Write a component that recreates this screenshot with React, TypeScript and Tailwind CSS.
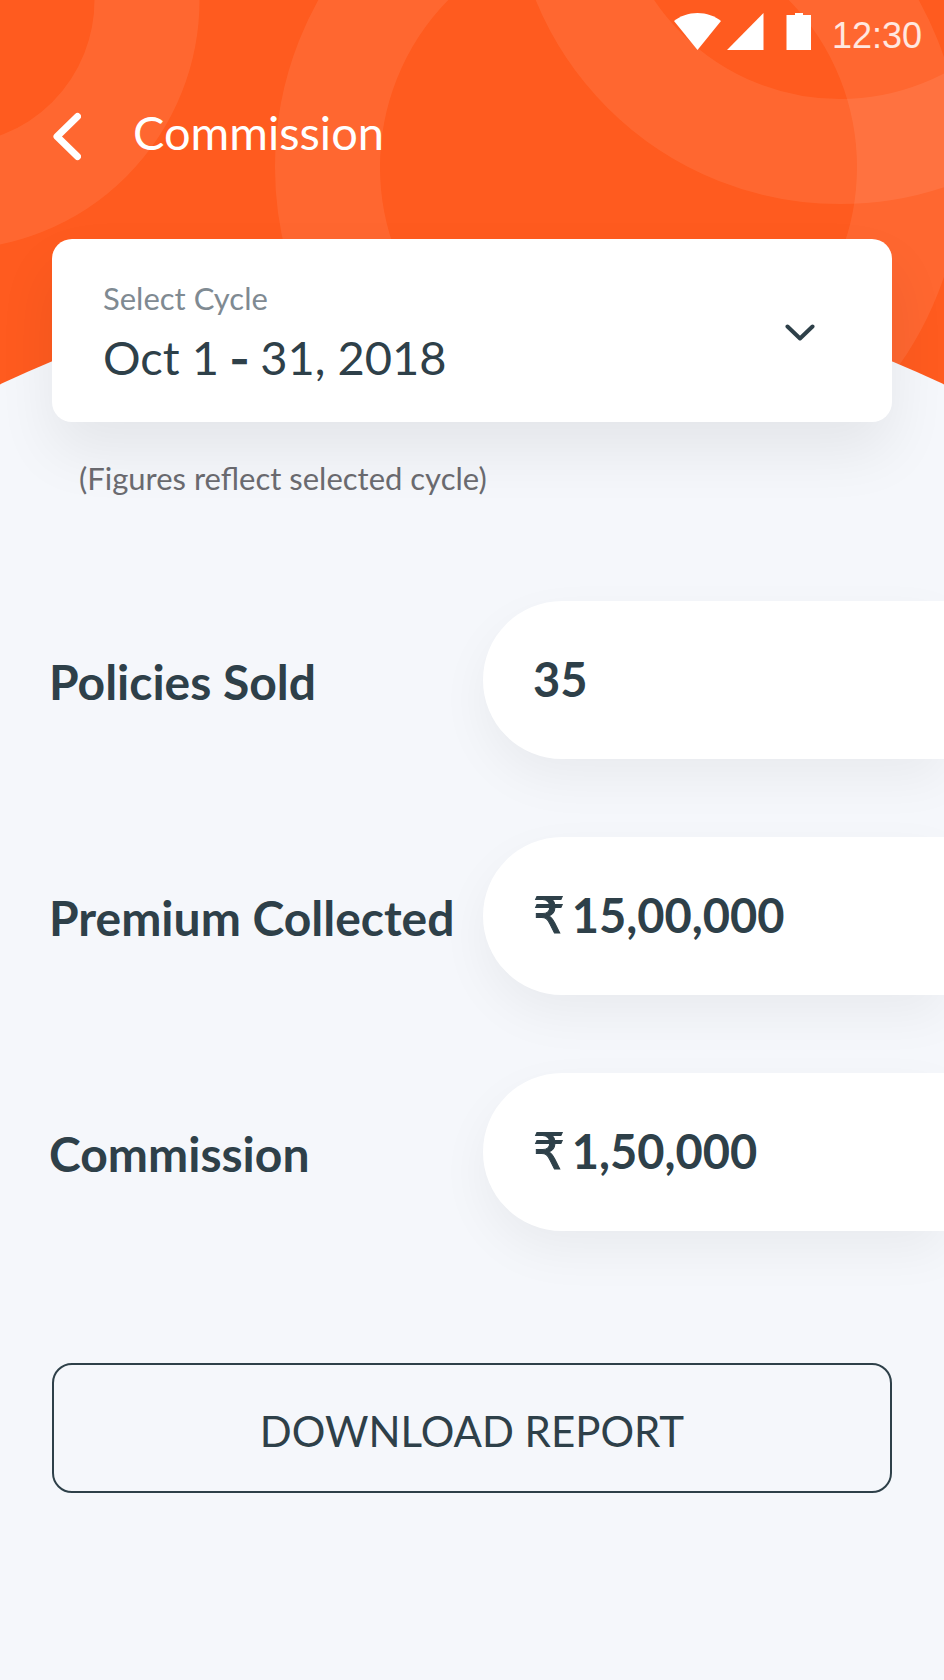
import { useState } from "react";

const cycles = [
  { id: "2018-10", start: "Oct 1", end: "31, 2018" },
  { id: "2018-09", start: "Sep 1", end: "30, 2018" },
  { id: "2018-08", start: "Aug 1", end: "31, 2018" },
];

type Figure = { label: string; amount: string; currency: boolean };

const figures: Figure[] = [
  { label: "Policies Sold", amount: "35", currency: false },
  { label: "Premium Collected", amount: "15,00,000", currency: true },
  { label: "Commission", amount: "1,50,000", currency: true },
];

function Backdrop() {
  return (
    <svg
      aria-hidden="true"
      viewBox="0 0 944 385"
      preserveAspectRatio="xMidYMin slice"
      className="absolute inset-x-0 top-0 h-[385px] w-full"
    >
      <rect width="944" height="385" fill="#ff5b1f" />
      <g fill="none" stroke="#fff" strokeOpacity="0.08" strokeWidth="105">
        <circle cx="-50" cy="0" r="197" />
        <circle cx="618.5" cy="167" r="291" />
        <circle cx="840" cy="-125" r="276.5" />
      </g>
      <circle cx="472" cy="1378" r="1100" fill="#f5f7fb" />
    </svg>
  );
}

function StatusBar() {
  return (
    <div className="flex h-[72px] items-start justify-end pt-[13px] pr-[22px] text-white">
      <svg aria-hidden="true" viewBox="0 0 138 38" className="mr-5 h-[38px] w-[138px]" fill="currentColor">
        <path d="M0 8C6 3 14.500 0 23.500 0s17.500 3 23.500 8L23.500 37z" />
        <path d="M89.500 0v37H53z" />
        <path d="M121 0h8v2h8v35h-24.500V2h8.500z" />
      </svg>
      <time className="font-['Liberation_Sans',sans-serif] text-4xl leading-[46px] text-white/85">12:30</time>
    </div>
  );
}

function CycleCard() {
  const [cycleId, setCycleId] = useState(cycles[0].id);
  const cycle = cycles.find((c) => c.id === cycleId) ?? cycles[0];

  return (
    <div className="relative mx-[52px] flex h-[183px] items-center justify-between rounded-[20px] bg-white pt-1 pr-[77px] pl-[51px] shadow-[0_30px_60px_rgba(0,0,0,0.07)]">
      <div>
        <label htmlFor="cycle" className="block text-[31px] leading-[40px] text-[#7f8a92]">
          Select Cycle
        </label>
        <div aria-hidden="true" className="mt-2 text-[47px] leading-[62px]">
          {cycle.start}
          <span className="font-[Inter,sans-serif] text-[44px] leading-none font-bold"> - </span>
          {cycle.end}
        </div>
      </div>
      <svg
        aria-hidden="true"
        viewBox="0 0 30 17"
        className="h-[17px] w-[30px]"
        fill="none"
        stroke="currentColor"
        strokeWidth="4"
        strokeLinecap="round"
        strokeLinejoin="round"
      >
        <path d="M2.500 2.500 15 14.500l12.500-12" />
      </svg>
      <select
        id="cycle"
        value={cycleId}
        onChange={(e) => setCycleId(e.target.value)}
        className="absolute inset-0 cursor-pointer appearance-none text-[31px] opacity-0"
      >
        {cycles.map((c) => (
          <option key={c.id} value={c.id}>
            {c.start} - {c.end}
          </option>
        ))}
      </select>
    </div>
  );
}

function FigureRow({ label, amount, currency }: Figure) {
  return (
    <div className="flex items-center">
      <dt className="w-[434px] shrink-0 pt-1 whitespace-nowrap">{label}</dt>
      <dd className="flex h-[158px] flex-1 items-center rounded-l-full bg-white pb-[2px] pl-[50px] text-[47px] leading-[56px] shadow-[0_20px_50px_rgba(0,0,0,0.05)]">
        <div className="flex items-baseline gap-[7px]">
          {currency && (
            <span className="font-['DejaVu_Sans',sans-serif] text-[50px] leading-none font-normal [-webkit-text-stroke:1px_currentColor]">
              ₹
            </span>
          )}
          <span>{amount}</span>
        </div>
      </dd>
    </div>
  );
}

export default function App() {
  return (
    <main className="relative min-h-screen overflow-hidden bg-[#f5f7fb] pb-12 font-[Lato,sans-serif] text-[#2e4049]">
      <Backdrop />
      <div className="relative">
        <StatusBar />
        <header className="flex h-[167px] items-start px-[52px] pt-8 text-white">
          <button type="button" aria-label="Back" className="mt-2 mr-[52px]">
            <svg
              aria-hidden="true"
              viewBox="0 0 29 49"
              className="h-[49px] w-[29px]"
              fill="none"
              stroke="currentColor"
              strokeWidth="7"
              strokeLinecap="round"
              strokeLinejoin="round"
            >
              <path d="M25.500 4.500 5 24.500l20.500 20" />
            </svg>
          </button>
          <h1 className="text-[47px] leading-[56px]">Commission</h1>
        </header>

        <CycleCard />

        <p className="mt-9 px-[79px] text-[31px] leading-[40px] text-[#6b6b70]">(Figures reflect selected cycle)</p>

        <dl className="mt-[103px] flex flex-col gap-[78px] pl-[49px] text-5xl font-bold">
          {figures.map((figure) => (
            <FigureRow key={figure.label} {...figure} />
          ))}
        </dl>

        <div className="mt-[132px] px-[52px]">
          <button
            type="button"
            className="h-[130px] w-full rounded-[20px] border-2 border-[#2e4049] pt-[6px] text-[42px]"
          >
            DOWNLOAD REPORT
          </button>
        </div>
      </div>
    </main>
  );
}
